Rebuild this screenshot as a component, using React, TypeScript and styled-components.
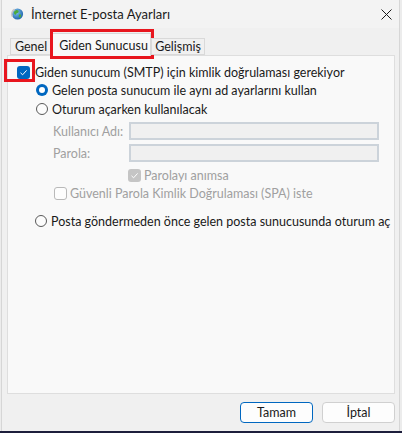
import styled, { createGlobalStyle } from 'styled-components';

const GlobalStyle = createGlobalStyle`
  html, body { margin: 0; padding: 0; }
  body {
    background: #ececec;
    font-family: Lato, "Noto Sans", sans-serif;
    font-size: 12.5px;
    color: #1a1a1a;
  }
`;

const Screen = styled.div`
  width: 402px;
  height: 433px;
  display: flex;
  flex-direction: column;
  background: #ececec;
  overflow: hidden;
`;

const Window = styled.div`
  margin-left: 1px;
  width: 399px;
  height: 431px;
  box-sizing: border-box;
  border-left: 1px solid #d6d6d6;
  border-right: 1px solid #d6d6d6;
  background: #f0f0f0;
  display: flex;
  flex-direction: column;
`;

const Desktop = styled.div`
  height: 2px;
  background: #1d1e3c;
`;

const TitleBar = styled.div`
  height: 28px;
  display: flex;
  align-items: center;
  padding-left: 8px;
  padding-right: 7px;
  background: #f3f3f3;
`;

const Title = styled.span`
  margin-left: 7px;
  font-size: 13px;
  color: #1a1a1a;
`;

const CloseButton = styled.span`
  margin-left: auto;
  display: flex;
`;

const TabRow = styled.div`
  height: 27px;
  display: flex;
  align-items: flex-end;
  padding-left: 8px;
  position: relative;
  z-index: 1;
`;

const Tab = styled.div<{ $active?: boolean; $width: number }>`
  position: relative;
  box-sizing: border-box;
  width: ${(p) => p.$width}px;
  height: ${(p) => (p.$active ? '23px' : '17px')};
  margin-bottom: ${(p) => (p.$active ? '-1px' : '0')};
  padding-top: ${(p) => (p.$active ? '1px' : '0')};
  padding-left: ${(p) => (p.$active ? '4px' : '0')};
  border: 1px solid #d9d9d9;
  border-bottom: ${(p) => (p.$active ? 'none' : '1px solid #d9d9d9')};
  background: ${(p) => (p.$active ? '#f9f9f9' : '#f0f0f0')};
  display: flex;
  align-items: center;
  justify-content: center;
`;

const Highlight = styled.span<{ $t: number; $l: number; $r: number; $b: number }>`
  position: absolute;
  top: ${(p) => p.$t}px;
  left: ${(p) => p.$l}px;
  right: ${(p) => p.$r}px;
  bottom: ${(p) => p.$b}px;
  border: 3px solid #e8161e;
  pointer-events: none;
`;

const Panel = styled.div`
  margin: 0 4px 0 5px;
  height: 339px;
  box-sizing: border-box;
  border: 1px solid #dedede;
  background: #f9f9f9;
  padding: 7px 0 0 9px;
  display: flex;
  flex-direction: column;
`;

const Row = styled.div<{ $indent?: number; $gap?: number; $top?: number }>`
  height: 18px;
  display: flex;
  align-items: center;
  margin-left: ${(p) => p.$indent ?? 0}px;
  margin-top: ${(p) => p.$top ?? 0}px;
  gap: ${(p) => p.$gap ?? 4}px;
  white-space: nowrap;
`;

const Label = styled.span<{ $disabled?: boolean }>`
  color: ${(p) => (p.$disabled ? '#a0a0a0' : '#1a1a1a')};
`;

const FieldLabel = styled.span`
  width: 76px;
  color: #a0a0a0;
`;

const Input = styled.div`
  width: 250px;
  height: 18px;
  box-sizing: border-box;
  border: 2px solid #ccd3da;
  background: #f0f0f0;
`;

const Box = styled.span<{ $state: 'checked' | 'grey' | 'empty' }>`
  position: relative;
  width: 13px;
  height: 13px;
  box-sizing: border-box;
  border-radius: 3px;
  flex-shrink: 0;
  display: flex;
  align-items: center;
  justify-content: center;
  background: ${(p) =>
    p.$state === 'checked' ? '#0067c0' : p.$state === 'grey' ? '#c5c5c5' : '#fdfdfd'};
  border: ${(p) => (p.$state === 'empty' ? '1px solid #b9b9b9' : 'none')};
`;

const Radio = styled.span<{ $on?: boolean }>`
  width: 12px;
  height: 12px;
  box-sizing: border-box;
  border-radius: 50%;
  flex-shrink: 0;
  display: flex;
  align-items: center;
  justify-content: center;
  background: ${(p) => (p.$on ? '#0067c0' : '#fcfcfc')};
  border: ${(p) => (p.$on ? 'none' : '1px solid #595959')};

  &::after {
    content: '';
    display: ${(p) => (p.$on ? 'block' : 'none')};
    width: 6px;
    height: 6px;
    border-radius: 50%;
    background: #ffffff;
  }
`;

const Footer = styled.div`
  flex: 1;
  display: flex;
  justify-content: flex-end;
  align-items: flex-start;
  gap: 9px;
  padding: 8px 4px 0 0;
`;

const Button = styled.button<{ $primary?: boolean }>`
  width: 73px;
  height: 21px;
  box-sizing: border-box;
  border-radius: 4px;
  border: 1px solid ${(p) => (p.$primary ? '#0067c0' : '#d0d0d0')};
  background: #fdfdfd;
  font-family: Lato, "Noto Sans", sans-serif;
  font-size: 12.5px;
  color: #1a1a1a;
  padding: 0;
`;

const Check = ({ color = '#fff' }: { color?: string }) => (
  <svg width="9" height="9" viewBox="0 0 9 9">
    <path d="M1.5 4.8 L3.6 6.8 L7.6 2.4" fill="none" stroke={color} strokeWidth="1" />
  </svg>
);

const GlobeIcon = () => (
  <svg width="14" height="14" viewBox="0 0 14 14">
    <defs>
      <radialGradient id="g" cx="0.4" cy="0.35" r="0.7">
        <stop offset="0" stopColor="#7fc4f0" />
        <stop offset="1" stopColor="#1a5fa8" />
      </radialGradient>
    </defs>
    <circle cx="7.5" cy="7" r="5.6" fill="url(#g)" />
    <path d="M6 3.2 C7.5 2.8 9 3.6 8.6 5 C8 6.2 6.6 5.8 6.2 7 C5.8 8.4 4.4 7.6 4 6.2 C3.8 4.8 4.8 3.6 6 3.2 Z" fill="#4caa3c" />
    <path d="M9.4 7.4 C10.6 7.2 11.6 8 11 9.4 C10.4 10.8 9 11 8.8 9.8 C8.6 8.8 8.8 7.6 9.4 7.4 Z" fill="#4caa3c" />
    <path d="M2.2 9.5 C1 7 2 3.6 4.6 2.2" fill="none" stroke="#c8c8c8" strokeWidth="1.6" />
  </svg>
);

const CloseIcon = () => (
  <svg width="11" height="11" viewBox="0 0 11 11">
    <path d="M0.5 0.5 L10.5 10.5 M10.5 0.5 L0.5 10.5" stroke="#1a1a1a" strokeWidth="1" />
  </svg>
);

export default function App() {
  return (
    <>
      <GlobalStyle />
      <Screen>
        <Window>
          <TitleBar>
            <GlobeIcon />
            <Title>İnternet E-posta Ayarları</Title>
            <CloseButton>
              <CloseIcon />
            </CloseButton>
          </TitleBar>

          <TabRow>
            <Tab $width={42}>Genel</Tab>
            <Tab $active $width={99}>
              Giden Sunucusu
              <Highlight $t={-5} $l={-3} $r={-4} $b={-3} />
            </Tab>
            <Tab $width={54}>Gelişmiş</Tab>
          </TabRow>

          <Panel>
            <Row $gap={5}>
              <Box $state="checked">
                <Check />
                <Highlight $t={-7} $l={-13} $r={-5} $b={-3} />
              </Box>
              <Label>Giden sunucum (SMTP) için kimlik doğrulaması gerekiyor</Label>
            </Row>
            <Row $indent={19}>
              <Radio $on />
              <Label>Gelen posta sunucum ile aynı ad ayarlarını kullan</Label>
            </Row>
            <Row $indent={19} $top={1}>
              <Radio />
              <Label>Oturum açarken kullanılacak</Label>
            </Row>
            <Row $indent={36} $gap={0} $top={4}>
              <FieldLabel>Kullanıcı Adı:</FieldLabel>
              <Input />
            </Row>
            <Row $indent={36} $gap={0} $top={4}>
              <FieldLabel>Parola:</FieldLabel>
              <Input />
            </Row>
            <Row $indent={111} $gap={3} $top={4}>
              <Box $state="grey">
                <Check />
              </Box>
              <Label $disabled>Parolayı anımsa</Label>
            </Row>
            <Row $indent={37} $gap={3}>
              <Box $state="empty" />
              <Label $disabled>Güvenli Parola Kimlik Doğrulaması (SPA) iste</Label>
            </Row>
            <Row $indent={18} $top={10}>
              <Radio />
              <Label>Posta göndermeden önce gelen posta sunucusunda oturum aç</Label>
            </Row>
          </Panel>

          <Footer>
            <Button $primary>Tamam</Button>
            <Button>İptal</Button>
          </Footer>
        </Window>
        <Desktop />
      </Screen>
    </>
  );
}
